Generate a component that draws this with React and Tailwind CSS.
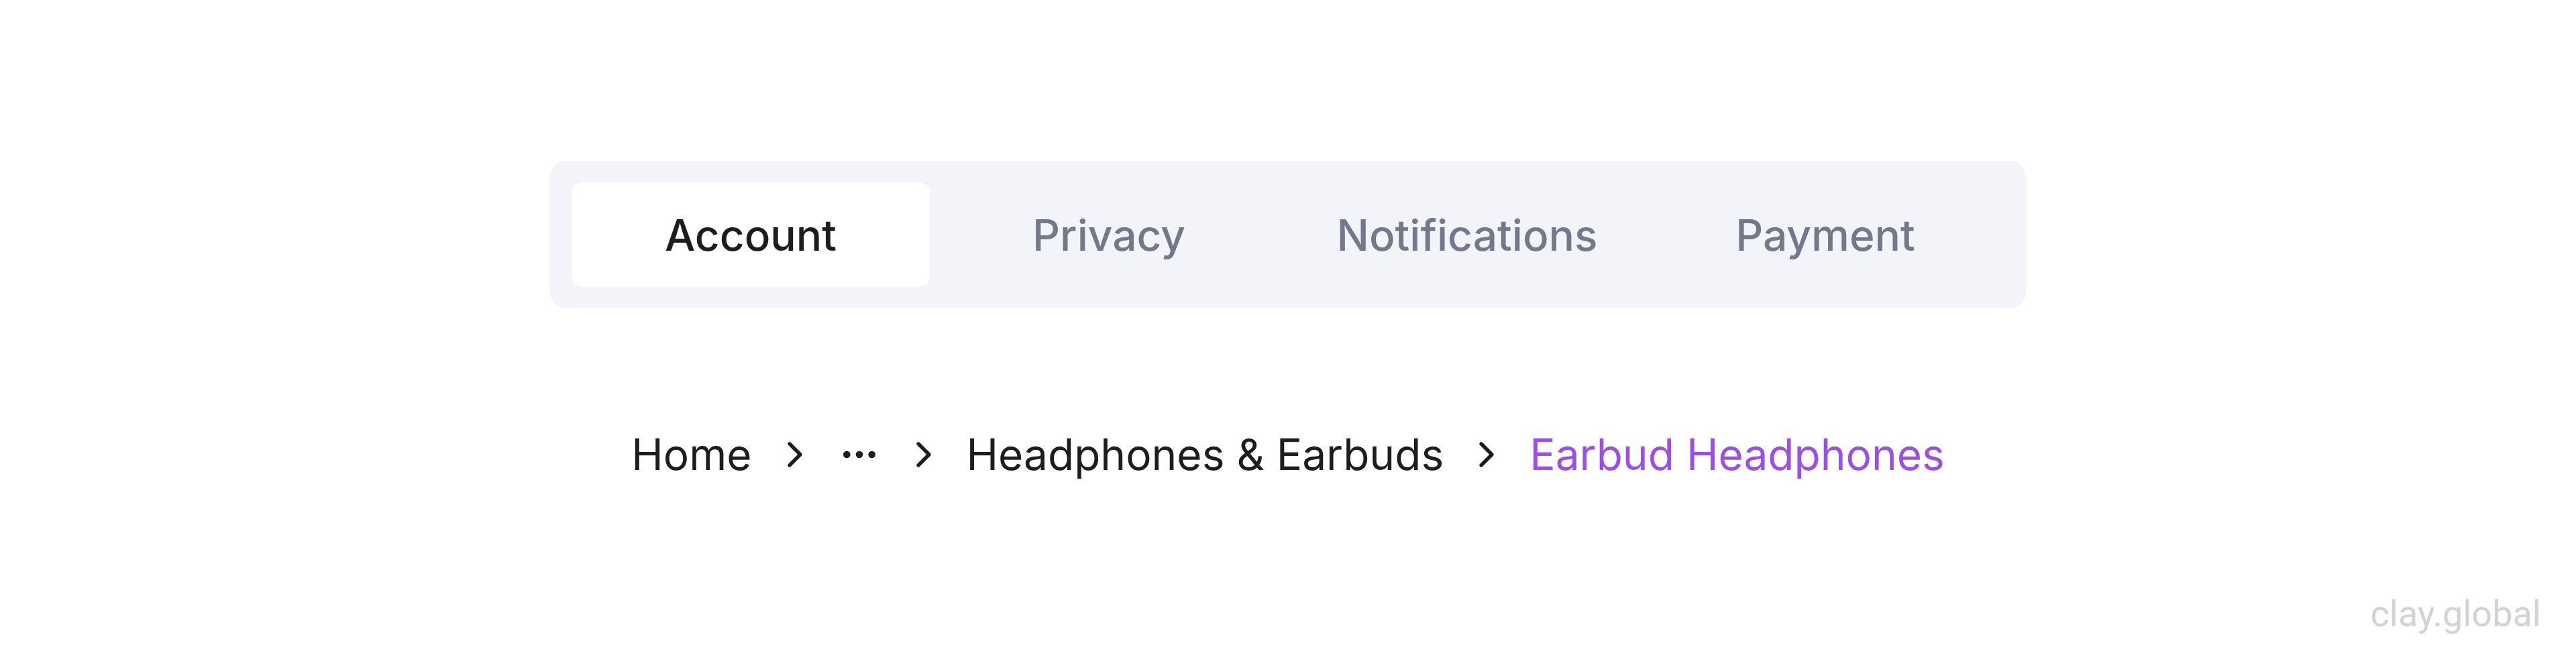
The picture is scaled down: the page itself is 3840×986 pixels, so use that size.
import React, { useState } from 'react';
import { ChevronRight, Ellipsis } from 'lucide-react';

const tabs = ['Account', 'Privacy', 'Notifications', 'Payment'];

const crumbs = ['Home', '...', 'Headphones & Earbuds', 'Earbud Headphones'];

const App = () => {
  const [active, setActive] = useState('Account');

  return (
    <div className="relative min-h-[986px] bg-white flex flex-col items-center pt-[240px] font-['Inter',sans-serif]">
      <div className="w-[2200px] h-[220px] bg-[#f3f4f9] rounded-[24px] p-[32px] grid grid-cols-4">
        {tabs.map((tab) => (
          <button
            key={tab}
            onClick={() => setActive(tab)}
            className={
              tab === active
                ? 'h-[156px] pt-[2px] rounded-[16px] bg-white text-[64px] font-medium text-[#1d1d1f]'
                : 'h-[156px] pt-[2px] rounded-[16px] text-[64px] font-medium text-[#76778a]'
            }
          >
            {tab}
          </button>
        ))}
      </div>

      <nav className="mt-[170px] flex items-center gap-[32px] text-[64px] leading-[96px] text-[#1d1d1f]">
        {crumbs.map((crumb, i) => (
          <React.Fragment key={crumb}>
            {i > 0 && <ChevronRight size={64} strokeWidth={2} className="text-[#1d1d1f]" />}
            {crumb === '...' ? (
              <Ellipsis size={64} strokeWidth={2} className="text-[#1d1d1f]" />
            ) : i === crumbs.length - 1 ? (
              <span className="text-[#9b4fe6]">{crumb}</span>
            ) : (
              <a href="#" className="text-[#1d1d1f]">{crumb}</a>
            )}
          </React.Fragment>
        ))}
      </nav>

      <div className="absolute right-[52px] bottom-[30px] text-[54px] text-[#d3d3d3] font-['Roboto',sans-serif]">
        clay.global
      </div>
    </div>
  );
};

export default App;
